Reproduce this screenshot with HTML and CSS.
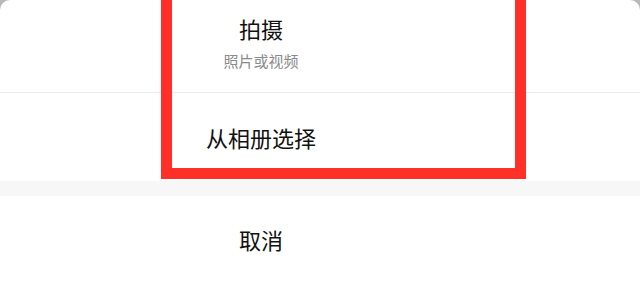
FILE: index.html
```html
<!DOCTYPE html>
<html>

<head>
  <meta charset="UTF-8">
  <title>选择图片</title>
  <link rel="stylesheet" href="styles.css">
</head>

<body>
  <div class="sheet">
    <div class="option shoot">
      <div class="label">
        <div class="title">拍摄</div>
        <div class="sub">照片或视频</div>
      </div>
    </div>
    <div class="option album">
      <div class="label">
        <div class="title">从相册选择</div>
      </div>
    </div>
    <div class="gap"></div>
    <div class="option cancel">
      <div class="label">
        <div class="title">取消</div>
      </div>
    </div>

    <div class="highlight"></div>
  </div>
</body>

</html>
```

FILE: styles.css
```css
* {
  margin: 0px;
  padding: 0px;
  box-sizing: border-box;
}

body {
  font-family: "Noto Sans CJK SC", "Noto Sans", sans-serif;
  background-color: #b9b9b9;
  width: 640px;
  height: 285px;
  overflow: hidden;
}

.sheet {
  position: relative;
  width: 640px;
  height: 285px;
  background-color: #ffffff;
  border-radius: 10px 10px 0 0;
}

.option {
  display: flex;
  align-items: center;
}

.label {
  width: 522px;
  text-align: center;
}

.title {
  font-size: 22px;
  line-height: 26px;
  color: #111111;
}

.sub {
  margin-top: 10px;
  font-size: 15px;
  line-height: 20px;
  color: #8a8a8a;
}

.shoot {
  height: 93px;
  align-items: flex-start;
  padding-top: 15px;
  border-bottom: 1px solid #ececec;
}

.album {
  height: 88px;
  padding-bottom: 0px;
}

.gap {
  height: 15px;
  background-color: #f7f7f7;
}

.cancel {
  height: 89px;
  padding-bottom: 3px;
}

/* red annotation frame drawn over the sheet */
.highlight {
  position: absolute;
  left: 161px;
  top: -11px;
  width: 365px;
  height: 190px;
  border: 11px solid #fe3028;
}
```
